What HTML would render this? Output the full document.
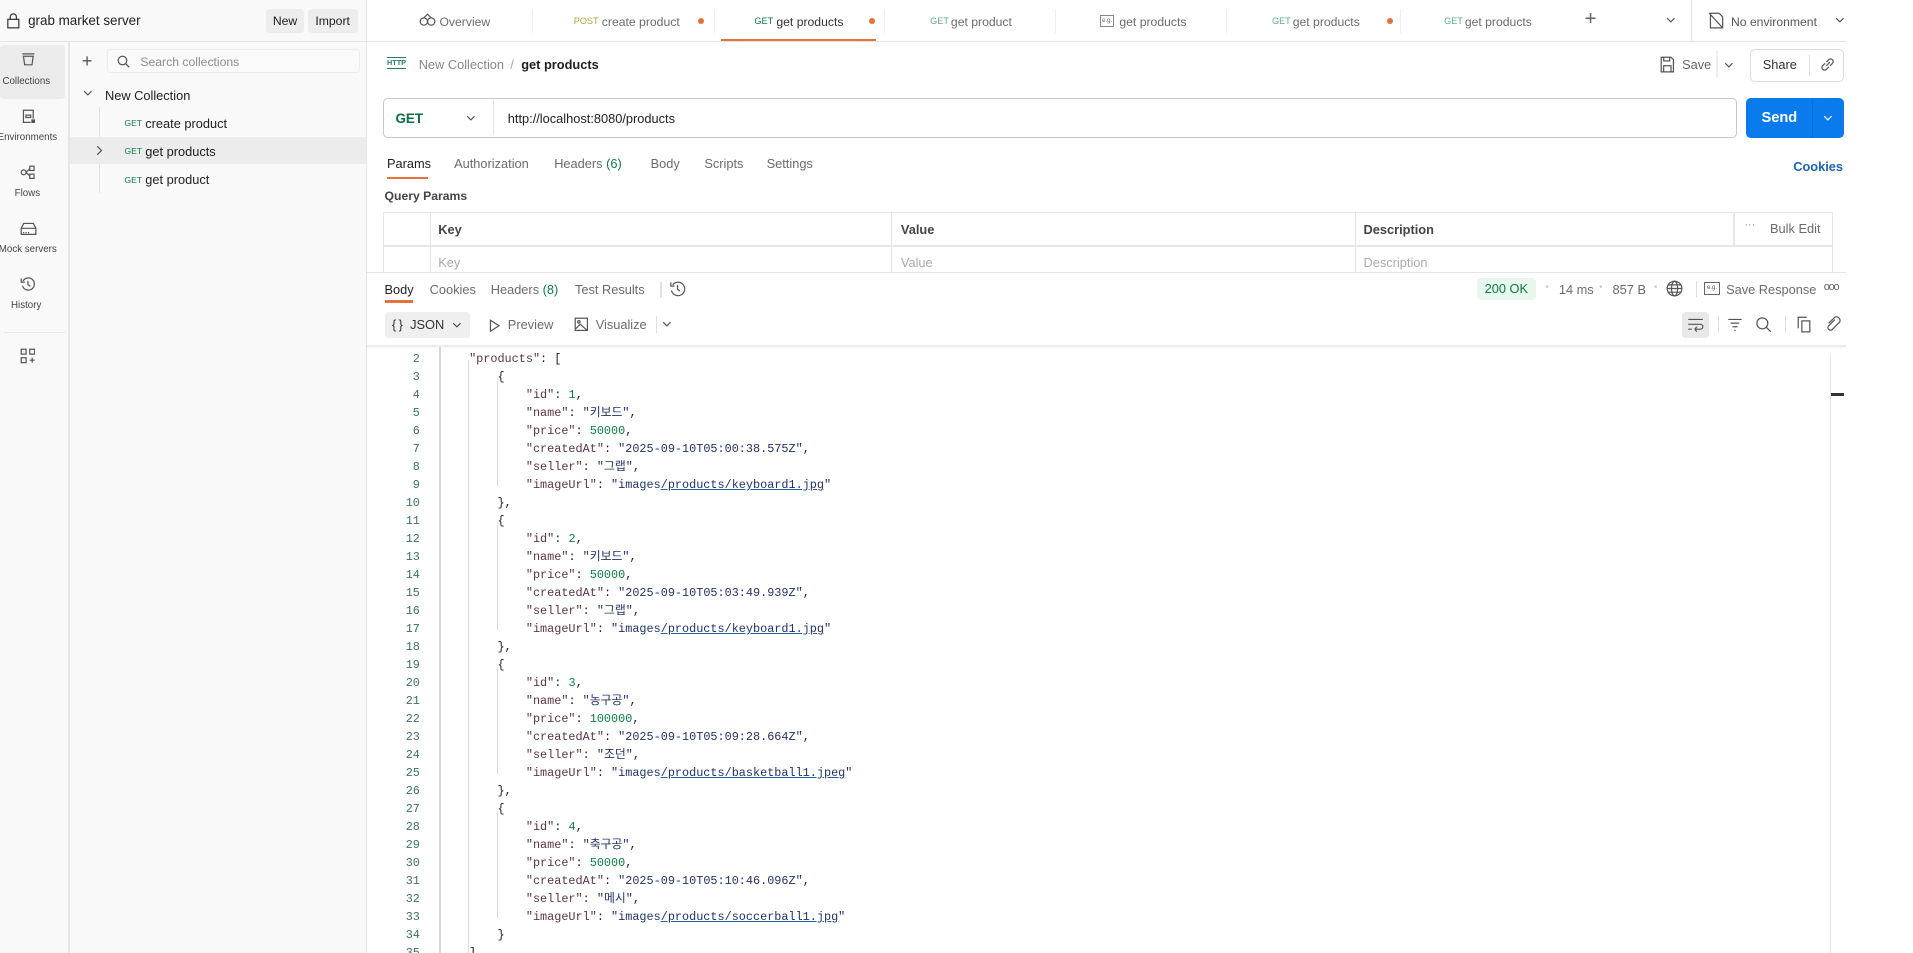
<!DOCTYPE html>
<html><head><meta charset="utf-8">
<style>
*{box-sizing:border-box;margin:0;padding:0}
html,body{width:1913px;height:953px;overflow:hidden;background:#fff}
#w{zoom:1.2207;width:1567px;height:781px;position:relative;overflow:hidden;font-family:"Liberation Sans","Noto Sans CJK KR",sans-serif;color:#212121;font-size:10px}
.a{position:absolute;white-space:nowrap}
.g{color:#0d7a47}
.m{color:#6b6b6b}
.code{font-family:"Liberation Mono","Noto Sans CJK KR",monospace;font-size:9.7px}
.k{color:#5b3347}.s{color:#243263}.n{color:#0c7b46}
.u{text-decoration:underline;text-decoration-color:#1d5fa6}
svg{position:absolute;fill:none;stroke:#555;stroke-width:1}
</style></head><body><div id="w">
<div class="a" style="left:0;top:0;width:301px;height:781px;background:#f9f9f9"></div>
<div class="a" style="left:0;top:0;width:1512px;height:34px;border-bottom:1px solid #e4e4e4"></div>
<div class="a" style="left:56px;top:34px;width:1px;height:747px;background:#e6e6e6"></div>
<div class="a" style="left:300px;top:0;width:1px;height:781px;background:#e6e6e6"></div>
<svg style="left:5px;top:10px" width="12" height="14" viewBox="0 0 12 14"><rect x="1.5" y="6" width="9" height="7" stroke="#333"/><path d="M3.5 6V4a2.5 2.5 0 0 1 5 0v2" stroke="#333"/></svg>
<div class="a" style="left:23px;top:11px;font-size:11px;color:#212121">grab market server</div>
<div class="a" style="left:218px;top:7px;width:31px;height:20px;background:#ededed;border-radius:3px;text-align:center;line-height:20px;font-size:10px">New</div>
<div class="a" style="left:252px;top:7px;width:41px;height:20px;background:#ededed;border-radius:3px;text-align:center;line-height:20px;font-size:10px">Import</div>
<div class="a" style="left:0;top:37px;width:53px;height:44px;background:#ebebeb;border-radius:3px"></div>
<svg style="left:17px;top:43px" width="12" height="12" viewBox="0 0 12 12"><path d="M1 1.5h10M2 3.5l1 7h6l1-7z"/></svg>
<div class="a" style="left:2px;top:62px;font-size:8px;color:#444">Collections</div>
<svg style="left:17px;top:89px" width="12" height="12" viewBox="0 0 12 12"><path d="M10 8V1H2v10h6M4 5h4v2H4z"/><rect x="9" y="9" width="2" height="2" fill="#555"/></svg>
<div class="a" style="left:-2px;top:108px;font-size:8px;color:#444">Environments</div>
<svg style="left:16px;top:135px" width="14" height="12" viewBox="0 0 14 12"><circle cx="3" cy="6" r="2"/><rect x="8" y="1" width="3.5" height="3.5"/><rect x="8" y="7.5" width="3.5" height="3.5"/><path d="M5 6l3-3M5 6l3 3"/></svg>
<div class="a" style="left:12px;top:154px;font-size:8px;color:#444">Flows</div>
<svg style="left:16px;top:181px" width="14" height="12" viewBox="0 0 14 12"><path d="M1 6l2-4h8l2 4v5H1zM1 6h12M3 9v1M5 9v1M7 9v1"/></svg>
<div class="a" style="left:-1px;top:200px;font-size:8px;color:#444">Mock servers</div>
<svg style="left:16px;top:226px" width="13" height="13" viewBox="0 0 13 13"><path d="M2.5 4A5 5 0 1 1 2 8M1 2v3h3M6.5 4v3l2 1.5"/></svg>
<div class="a" style="left:9px;top:246px;font-size:8px;color:#444">History</div>
<div class="a" style="left:3px;top:272px;width:50px;height:1px;background:#e6e6e6"></div>
<svg style="left:16px;top:285px" width="13" height="13" viewBox="0 0 13 13"><rect x="1" y="1" width="4" height="4"/><rect x="8" y="1" width="4" height="4"/><rect x="1" y="8" width="4" height="4"/><path d="M10 8v4M8 10h4"/></svg>
<div class="a" style="left:67px;top:41px;font-size:15px;color:#555;font-weight:300">+</div>
<div class="a" style="left:88px;top:40px;width:207px;height:20px;border:1px solid #ededed;background:#fafafa;border-radius:3px"></div>
<svg style="left:96px;top:45px" width="11" height="11" viewBox="0 0 11 11"><circle cx="4.5" cy="4.5" r="3.5"/><path d="M7 7l3 3"/></svg>
<div class="a" style="left:115px;top:45px;font-size:10px;color:#8c8c8c">Search collections</div>
<svg style="left:68px;top:74px" width="8" height="6" viewBox="0 0 8 6"><path d="M1 1l3 3 3-3"/></svg>
<div class="a" style="left:86px;top:72px;font-size:10.5px">New Collection</div>
<div class="a" style="left:81px;top:88px;width:1px;height:70px;background:#e3e3e3"></div>
<div class="a" style="left:57px;top:112px;width:243px;height:22px;background:#ececec"></div>
<div class="a" style="left:102px;top:97px;font-size:7px"><span class="g">GET</span></div>
<div class="a" style="left:119px;top:95px;font-size:10.5px">create product</div>
<svg style="left:79px;top:119px" width="6" height="9" viewBox="0 0 6 9"><path d="M1 1l3.5 3.5L1 8"/></svg>
<div class="a" style="left:102px;top:120px;font-size:7px"><span class="g">GET</span></div>
<div class="a" style="left:119px;top:118px;font-size:10.5px">get products</div>
<div class="a" style="left:102px;top:143px;font-size:7px"><span class="g">GET</span></div>
<div class="a" style="left:119px;top:141px;font-size:10.5px">get product</div>
<svg style="left:343px;top:11px" width="14" height="11" viewBox="0 0 14 11"><circle cx="4" cy="7" r="3"/><circle cx="10" cy="7" r="3"/><path d="M4 4l3-3 3 3"/></svg>
<div class="a m" style="left:360px;top:12px;font-size:10px">Overview</div>
<div class="a" style="left:436px;top:7px;width:1px;height:20px;background:#eee"></div>
<div class="a" style="left:470px;top:13px;font-size:7.5px;color:#b5a23a">POST</div>
<div class="a m" style="left:493px;top:12px;font-size:10px">create product</div>
<div class="a" style="left:572px;top:15px;width:5px;height:5px;border-radius:50%;background:#e8703a"></div>
<div class="a" style="left:585px;top:7px;width:1px;height:20px;background:#eee"></div>
<div class="a" style="left:591px;top:32px;width:127px;height:2px;background:#e8703a"></div>
<div class="a g" style="left:618px;top:13px;font-size:7.5px">GET</div>
<div class="a" style="left:636px;top:12px;font-size:10px;color:#333">get products</div>
<div class="a" style="left:712px;top:15px;width:5px;height:5px;border-radius:50%;background:#e8703a"></div>
<div class="a" style="left:724px;top:7px;width:1px;height:20px;background:#eee"></div>
<div class="a" style="left:762px;top:13px;font-size:7.5px;color:#5fae87">GET</div>
<div class="a m" style="left:779px;top:12px;font-size:10px">get product</div>
<div class="a" style="left:864px;top:7px;width:1px;height:20px;background:#eee"></div>
<div class="a" style="left:901px;top:12px;width:12px;height:10px;border:1px solid #888;font-size:5px;text-align:center;line-height:8px;color:#666">e.g.</div>
<div class="a m" style="left:917px;top:12px;font-size:10px">get products</div>
<div class="a" style="left:1004px;top:7px;width:1px;height:20px;background:#eee"></div>
<div class="a" style="left:1042px;top:13px;font-size:7.5px;color:#5fae87">GET</div>
<div class="a m" style="left:1059px;top:12px;font-size:10px">get products</div>
<div class="a" style="left:1136px;top:15px;width:5px;height:5px;border-radius:50%;background:#e8703a"></div>
<div class="a" style="left:1147px;top:7px;width:1px;height:20px;background:#eee"></div>
<div class="a" style="left:1183px;top:13px;font-size:7.5px;color:#5fae87">GET</div>
<div class="a m" style="left:1200px;top:12px;font-size:10px">get products</div>
<div class="a" style="left:1298px;top:6px;font-size:17px;color:#666;font-weight:300">+</div>
<svg style="left:1365px;top:14px" width="8" height="6" viewBox="0 0 8 6"><path d="M1 1l3 3 3-3"/></svg>
<div class="a" style="left:1385px;top:0;width:1px;height:34px;background:#e6e6e6"></div>
<svg style="left:1399px;top:10px" width="13" height="14" viewBox="0 0 13 14"><path d="M2 1h7l3 3v9H2zM1 1l11 12"/></svg>
<div class="a m" style="left:1418px;top:12px;font-size:10px;color:#555">No environment</div>
<svg style="left:1503px;top:14px" width="8" height="6" viewBox="0 0 8 6"><path d="M1 1l3 3 3-3"/></svg>
<div class="a" style="left:317px;top:47px;font-size:6px;color:#2a7a6a;font-weight:bold;border-top:1px solid #2a7a6a;border-bottom:1px solid #2a7a6a;line-height:8px">HTTP</div>
<div class="a" style="left:343px;top:47px;font-size:10.5px;color:#888">New Collection</div>
<div class="a" style="left:418px;top:47px;font-size:10.5px;color:#aaa">/</div>
<div class="a" style="left:427px;top:47px;font-size:10.5px;font-weight:bold;color:#212121">get products</div>
<svg style="left:1360px;top:46px" width="12" height="14" viewBox="0 0 12 14"><path d="M1 1h8l2 2v10H1zM3 1v3h5V1M3 13V8h6v5"/></svg>
<div class="a" style="left:1378px;top:47px;font-size:10.5px;color:#666">Save</div>
<div class="a" style="left:1406px;top:42px;width:1px;height:22px;background:#eee"></div>
<svg style="left:1412px;top:51px" width="8" height="6" viewBox="0 0 8 6"><path d="M1 1l3 3 3-3"/></svg>
<div class="a" style="left:1434px;top:40px;width:77px;height:27px;border:1px solid #dcdcdc;border-radius:4px"></div>
<div class="a" style="left:1444px;top:47px;font-size:10.5px;color:#333">Share</div>
<div class="a" style="left:1482px;top:45px;width:1px;height:17px;background:#ddd"></div>
<svg style="left:1490px;top:46px" width="14" height="14" viewBox="0 0 14 14"><path d="M6 8l3-3M5 6L3 8a2 2 0 0 0 3 3l2-2M9 8l2-2a2 2 0 0 0-3-3L6 5"/></svg>
<div class="a" style="left:314px;top:80px;width:1109px;height:33px;border:1px solid #c8c8c8;border-radius:4px"></div>
<div class="a" style="left:324px;top:91px;font-size:11px;font-weight:bold;color:#0d6e43">GET</div>
<svg style="left:382px;top:94px" width="8" height="6" viewBox="0 0 8 6"><path d="M1 1l3 3 3-3"/></svg>
<div class="a" style="left:404px;top:82px;width:1px;height:29px;background:#e6e6e6"></div>
<div class="a" style="left:416px;top:91px;font-size:10.5px;color:#212121">http://localhost:8080/products</div>
<div class="a" style="left:1430px;top:80px;width:81px;height:33px;background:#097bed;border-radius:4px"></div>
<div class="a" style="left:1443px;top:90px;font-size:12px;font-weight:bold;color:#fff">Send</div>
<div class="a" style="left:1484px;top:80px;width:1px;height:33px;background:#0a6fd4"></div>
<svg style="left:1493px;top:94px;stroke:#fff" width="8" height="6" viewBox="0 0 8 6"><path d="M1 1l3 3 3-3"/></svg>
<div class="a" style="left:317px;top:128px;font-size:10.5px;color:#212121">Params</div>
<div class="a" style="left:317px;top:145px;width:34px;height:2px;background:#e8703a"></div>
<div class="a m" style="left:372px;top:128px;font-size:10.5px">Authorization</div>
<div class="a m" style="left:454px;top:128px;font-size:10.5px">Headers <span class="g">(6)</span></div>
<div class="a m" style="left:533px;top:128px;font-size:10.5px">Body</div>
<div class="a m" style="left:577px;top:128px;font-size:10.5px">Scripts</div>
<div class="a m" style="left:628px;top:128px;font-size:10.5px">Settings</div>
<div class="a" style="left:1469px;top:130px;font-size:10.5px;font-weight:bold;color:#1d63b8">Cookies</div>
<div class="a" style="left:315px;top:155px;font-size:10px;font-weight:bold;color:#444">Query Params</div>
<div class="a" style="left:314px;top:174px;width:1188px;height:60px;border:1px solid #e6e6e6"></div>
<div class="a" style="left:314px;top:201px;width:1188px;height:1px;background:#e6e6e6"></div>
<div class="a" style="left:352px;top:174px;width:1px;height:50px;background:#e6e6e6"></div>
<div class="a" style="left:730px;top:174px;width:1px;height:50px;background:#e6e6e6"></div>
<div class="a" style="left:1110px;top:174px;width:1px;height:50px;background:#e6e6e6"></div>
<div class="a" style="left:1420px;top:174px;width:1px;height:27px;background:#e6e6e6"></div>
<div class="a" style="left:359px;top:182px;font-size:10.5px;font-weight:bold;color:#444">Key</div>
<div class="a" style="left:738px;top:182px;font-size:10.5px;font-weight:bold;color:#444">Value</div>
<div class="a" style="left:1117px;top:182px;font-size:10.5px;font-weight:bold;color:#444">Description</div>
<div class="a" style="left:1429px;top:179px;font-size:9px;color:#888">···</div>
<div class="a m" style="left:1450px;top:181px;font-size:10.5px">Bulk Edit</div>
<div class="a" style="left:359px;top:209px;font-size:10.5px;color:#aaa">Key</div>
<div class="a" style="left:738px;top:209px;font-size:10.5px;color:#aaa">Value</div>
<div class="a" style="left:1117px;top:209px;font-size:10.5px;color:#aaa">Description</div>
<div class="a" style="left:301px;top:223px;width:1211px;height:558px;background:#fff;border-top:1px solid #e4e4e4"></div>
<div class="a code" style="left:300px;top:272px;line-height:14.75px;width:1190px">
<div id="ln" style="position:absolute;left:0;top:0;width:44px;text-align:right;color:#3e6e6e"></div>
<div id="cd" style="position:absolute;left:61px;top:0;white-space:pre"></div>
</div>
<div class="a" style="left:360px;top:284px;width:1px;height:497px;background:#d8d8d8"></div>
<div class="a" style="left:383px;top:295px;width:1px;height:486px;background:#d8d8d8"></div>
<div class="a" style="left:407px;top:310px;width:1px;height:88px;background:#d8d8d8"></div>
<div class="a" style="left:407px;top:428px;width:1px;height:88px;background:#d8d8d8"></div>
<div class="a" style="left:407px;top:546px;width:1px;height:88px;background:#d8d8d8"></div>
<div class="a" style="left:407px;top:664px;width:1px;height:88px;background:#d8d8d8"></div>
<div class="a" style="left:301px;top:248px;width:1211px;height:35px;background:#fff"></div>
<div class="a" style="left:301px;top:283px;width:1211px;height:1px;background:#ececec;box-shadow:0 1px 2px rgba(0,0,0,.05)"></div>
<div class="a" style="left:315px;top:231px;font-size:10.5px;color:#212121">Body</div>
<div class="a" style="left:315px;top:246px;width:23px;height:2px;background:#e8703a"></div>
<div class="a m" style="left:352px;top:231px;font-size:10.5px">Cookies</div>
<div class="a m" style="left:402px;top:231px;font-size:10.5px">Headers <span class="g">(8)</span></div>
<div class="a m" style="left:471px;top:231px;font-size:10.5px">Test Results</div>
<div class="a" style="left:541px;top:231px;width:1px;height:13px;background:#e0e0e0"></div>
<svg style="left:548px;top:229px" width="14" height="14" viewBox="0 0 14 14"><path d="M3 4A5.5 5.5 0 1 1 2 8.5M1.5 2v3h3M7 4v3.5l2 1.5"/></svg>
<div class="a" style="left:1210px;top:228px;width:48px;height:18px;background:#e7f7ee;border-radius:3px;font-size:10.5px;color:#0b7a3d;text-align:center;line-height:18px">200 OK</div>
<div class="a" style="left:1266px;top:231px;font-size:8px;color:#ccc">•</div>
<div class="a m" style="left:1277px;top:231px;font-size:10.5px">14 ms</div>
<div class="a" style="left:1310px;top:231px;font-size:8px;color:#ccc">•</div>
<div class="a m" style="left:1321px;top:231px;font-size:10.5px">857 B</div>
<div class="a" style="left:1355px;top:231px;font-size:8px;color:#ccc">•</div>
<svg style="left:1365px;top:229px" width="14" height="14" viewBox="0 0 14 14"><circle cx="7" cy="7" r="6"/><ellipse cx="7" cy="7" rx="2.5" ry="6"/><path d="M1 7h12M2 4h10M2 10h10"/></svg>
<div class="a" style="left:1389px;top:230px;width:1px;height:13px;background:#e0e0e0"></div>
<div class="a" style="left:1396px;top:231px;width:13px;height:11px;border:1px solid #666;font-size:5px;text-align:center;line-height:9px;color:#555">e.g.</div>
<div class="a m" style="left:1414px;top:231px;font-size:10.5px">Save Response</div>
<div class="a" style="left:1494px;top:230px;font-size:9px;color:#666;letter-spacing:-1px">ooo</div>
<div class="a" style="left:315px;top:256px;width:70px;height:21px;background:#efefef;border-radius:3px"></div>
<div class="a" style="left:321px;top:260px;font-size:10.5px;color:#333">{&thinsp;}&nbsp; JSON</div>
<svg style="left:370px;top:264px" width="8" height="6" viewBox="0 0 8 6"><path d="M1 1l3 3 3-3"/></svg>
<svg style="left:400px;top:261px" width="10" height="11" viewBox="0 0 10 11"><path d="M2 1l7 4.5L2 10z"/></svg>
<div class="a m" style="left:416px;top:260px;font-size:10.5px">Preview</div>
<svg style="left:470px;top:260px" width="12" height="12" viewBox="0 0 12 12"><rect x="1" y="1" width="10" height="10"/><circle cx="4" cy="4" r="1"/><path d="M1 10l4-4 6 5"/></svg>
<div class="a m" style="left:488px;top:260px;font-size:10.5px">Visualize</div>
<div class="a" style="left:537px;top:259px;width:1px;height:14px;background:#e0e0e0"></div>
<svg style="left:542px;top:263px" width="8" height="6" viewBox="0 0 8 6"><path d="M1 1l3 3 3-3"/></svg>
<div class="a" style="left:1378px;top:256px;width:22px;height:21px;background:#e8e8e8;border-radius:3px"></div>
<svg style="left:1382px;top:260px" width="14" height="13" viewBox="0 0 14 13"><path d="M1 2h12M1 6h10a2 2 0 0 1 0 4H7M8 8l-1.5 2L8 12M1 10h3"/></svg>
<div class="a" style="left:1407px;top:259px;width:1px;height:14px;background:#e0e0e0"></div>
<svg style="left:1415px;top:260px" width="13" height="12" viewBox="0 0 13 12"><path d="M1 2h11M3 5h7M4.5 8h4M6 11h1"/></svg>
<svg style="left:1438px;top:259px" width="14" height="14" viewBox="0 0 14 14"><circle cx="6" cy="6" r="4.5"/><path d="M9.5 9.5l3.5 3.5"/></svg>
<div class="a" style="left:1462px;top:259px;width:1px;height:14px;background:#e0e0e0"></div>
<svg style="left:1472px;top:259px" width="12" height="14" viewBox="0 0 12 14"><path d="M1 10V1h7"/><rect x="4" y="4" width="6.5" height="9"/></svg>
<svg style="left:1495px;top:259px" width="14" height="14" viewBox="0 0 14 14"><path d="M8 3l-5 5a2 2 0 0 0 3 3l6-6a3 3 0 0 0-4-4L3 6"/></svg>
<div class="a" style="left:1499px;top:290px;width:1px;height:491px;background:#e6e6e6"></div>
<div class="a" style="left:1500px;top:322px;width:11px;height:2px;background:#333"></div>
</div>
<script>
var P=[[1,"키보드",50000,"2025-09-10T05:00:38.575Z","그랩","keyboard1.jpg"],[2,"키보드",50000,"2025-09-10T05:03:49.939Z","그랩","keyboard1.jpg"],[3,"농구공",100000,"2025-09-10T05:09:28.664Z","조던","basketball1.jpeg"],[4,"축구공",50000,"2025-09-10T05:10:46.096Z","메시","soccerball1.jpg"]];
function k(x){return '<span class="k">"'+x+'"</span>: '}
function s(x){return '<span class="s">"'+x+'"</span>'}
function n(x){return '<span class="n">'+x+'</span>'}
var L=['{','    '+k('products')+'['];
var I='        ';
P.forEach(function(p,i){L.push('        {');
L.push(I+'    '+k('id')+n(p[0])+',');L.push(I+'    '+k('name')+s(p[1])+',');L.push(I+'    '+k('price')+n(p[2])+',');L.push(I+'    '+k('createdAt')+s(p[3])+',');L.push(I+'    '+k('seller')+s(p[4])+',');L.push(I+'    '+k('imageUrl')+'<span class="s">"images<span class="u">/products/'+p[5]+'</span>"</span>');
L.push('        }'+(i<3?',':''));});
L.push('    ]');L.push('}');
var ln='',cd='';for(var i=0;i<L.length;i++){ln+=(i+1)+'<br>';cd+=L[i]+'\n';}
document.getElementById('ln').innerHTML=ln;document.getElementById('cd').innerHTML=cd;
</script>
</body></html>
